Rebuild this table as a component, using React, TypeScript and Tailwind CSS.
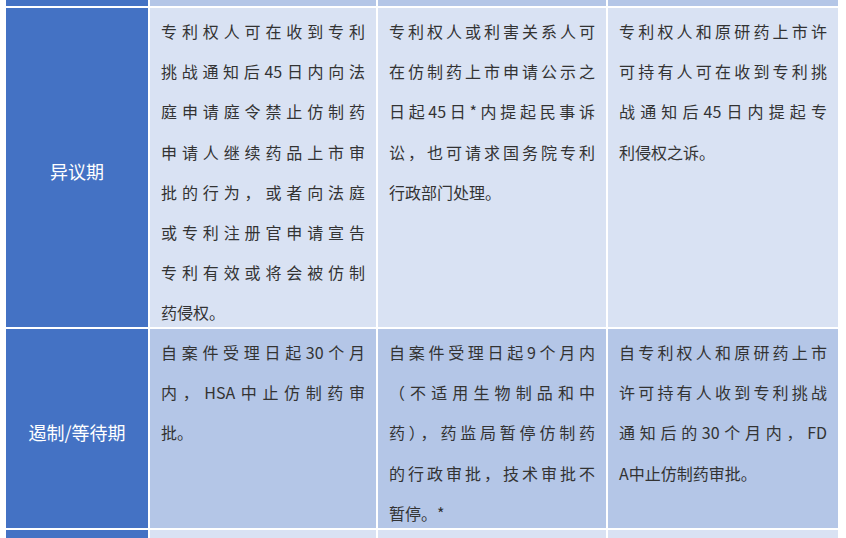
import React from 'react';

interface StageRow {
  label: string;
  tone: 'light' | 'dark';
  cells: string[][];
}

const rows: StageRow[] = [
  {
    label: '异议期',
    tone: 'light',
    cells: [
      [
        '专利权人可在收到专利',
        '挑战通知后45日内向法',
        '庭申请庭令禁止仿制药',
        '申请人继续药品上市审',
        '批的行为，或者向法庭',
        '或专利注册官申请宣告',
        '专利有效或将会被仿制',
        '药侵权。',
      ],
      [
        '专利权人或利害关系人可',
        '在仿制药上市申请公示之',
        '日起45日*内提起民事诉',
        '讼，也可请求国务院专利',
        '行政部门处理。',
      ],
      [
        '专利权人和原研药上市许',
        '可持有人可在收到专利挑',
        '战通知后45日内提起专',
        '利侵权之诉。',
      ],
    ],
  },
  {
    label: '遏制/等待期',
    tone: 'dark',
    cells: [
      ['自案件受理日起30个月', '内，HSA中止仿制药审', '批。'],
      [
        '自案件受理日起9个月内',
        '（不适用生物制品和中',
        '药），药监局暂停仿制药',
        '的行政审批，技术审批不',
        '暂停。*',
      ],
      [
        '自专利权人和原研药上市',
        '许可持有人收到专利挑战',
        '通知后的30个月内，FD',
        'A中止仿制药审批。',
      ],
    ],
  },
];

const toneBg = (tone: 'light' | 'dark') => (tone === 'light' ? 'bg-[#d9e2f3]' : 'bg-[#b4c6e7]');

const Cell = ({ lines, tone }: { lines: string[]; tone: 'light' | 'dark' }) => (
  <div className={`${toneBg(tone)} overflow-hidden px-[11px] pt-[3px] text-[16px] leading-[40.2px] text-[#333333]`}>
    {lines.map((line, i) => (
      <div
        key={i}
        className={i < lines.length - 1 ? 'text-justify [text-align-last:justify] whitespace-nowrap' : 'text-left whitespace-nowrap'}
      >
        {line}
      </div>
    ))}
  </div>
);

const App = () => {
  return (
    <div
      className="h-[538px] w-[846px] overflow-hidden bg-white"
      style={{ fontFamily: '"Noto Sans CJK SC", "Noto Sans", sans-serif' }}
    >
      <div className="ml-[6px] grid w-[832px] grid-cols-[142px_226px_228px_230px] grid-rows-[6px_319px_199px_20px] gap-[2px] bg-white">
        {/* cut-off row above */}
        <div className="bg-[#4472c4]" />
        <div className="bg-[#b4c6e7]" />
        <div className="bg-[#b4c6e7]" />
        <div className="bg-[#b4c6e7]" />

        {rows.map((row) => (
          <React.Fragment key={row.label}>
            <div className="flex items-center justify-center overflow-hidden bg-[#4472c4] pt-2 text-[18px] text-white">
              {row.label}
            </div>
            {row.cells.map((lines, i) => (
              <Cell key={i} lines={lines} tone={row.tone} />
            ))}
          </React.Fragment>
        ))}

        {/* next row, cut off below */}
        <div className="bg-[#4472c4]" />
        <div className="bg-[#d9e2f3]" />
        <div className="bg-[#d9e2f3]" />
        <div className="bg-[#d9e2f3]" />
      </div>
    </div>
  );
};

export default App;
